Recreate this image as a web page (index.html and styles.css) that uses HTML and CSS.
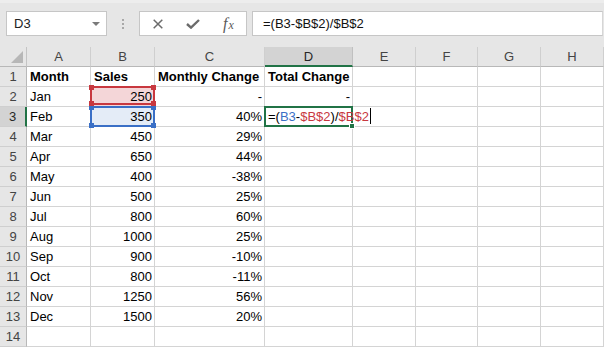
FILE: index.html
```html
<!DOCTYPE html>
<html>
<head>
<meta charset="utf-8">
<link rel="stylesheet" href="styles.css">
</head>
<body>
<div class="toolbar">
  <div class="namebox"><span class="nb-text">D3</span><span class="caret"></span></div>
  <div class="grip"><i></i><i></i><i></i></div>
  <div class="fbuttons">
    <span class="btn"><svg width="10" height="10" viewBox="0 0 10 10"><path d="M0.7 0.7 L9.3 9.3 M9.3 0.7 L0.7 9.3" stroke="#6b6b6b" stroke-width="1.5" fill="none"/></svg></span>
    <span class="btn"><svg width="14" height="10" viewBox="0 0 14 10"><path d="M1 5 L5 8.6 L13 1" stroke="#6b6b6b" stroke-width="2.4" fill="none"/></svg></span>
    <span class="btn fx"><span class="fx-f">f</span><span class="fx-x">x</span></span>
  </div>
  <div class="fbar">=(B3-$B$2)/$B$2</div>
</div>
<div class="sheet">
  <div class="corner"><svg width="12" height="12" viewBox="0 0 12 12"><path d="M12 0 L12 12 L0 12 Z" fill="#b7b7b7"/></svg></div>
  <div class="hd">A</div><div class="hd">B</div><div class="hd">C</div><div class="hd sel-col">D</div><div class="hd">E</div><div class="hd">F</div><div class="hd">G</div><div class="hd">H</div>

  <div class="rh">1</div><div class="c b">Month</div><div class="c b">Sales</div><div class="c b">Monthly Change</div><div class="c b">Total Change</div><div class="c"></div><div class="c"></div><div class="c"></div><div class="c"></div>

  <div class="rh">2</div><div class="c">Jan</div><div class="c n ref-red"><span class="rbox red"><i class="sq tl"></i><i class="sq tr"></i><i class="sq bl"></i><i class="sq br"></i></span>250</div><div class="c n">-</div><div class="c n">-</div><div class="c"></div><div class="c"></div><div class="c"></div><div class="c"></div>

  <div class="rh sel-row">3</div><div class="c">Feb</div><div class="c n ref-blue"><span class="rbox blue"><i class="sq tl"></i><i class="sq tr"></i><i class="sq bl"></i><i class="sq br"></i></span>350</div><div class="c n">40%</div><div class="c active"><span class="abox"><i class="handle"></i></span><span class="ftext">=(<span class="kb">B3</span>-<span class="kr">$B$2</span>)/<span class="kr">$B$2</span><span class="cursor"></span></span></div><div class="c"></div><div class="c"></div><div class="c"></div><div class="c"></div>

  <div class="rh">4</div><div class="c">Mar</div><div class="c n">450</div><div class="c n">29%</div><div class="c"></div><div class="c"></div><div class="c"></div><div class="c"></div><div class="c"></div>
  <div class="rh">5</div><div class="c">Apr</div><div class="c n">650</div><div class="c n">44%</div><div class="c"></div><div class="c"></div><div class="c"></div><div class="c"></div><div class="c"></div>
  <div class="rh">6</div><div class="c">May</div><div class="c n">400</div><div class="c n">-38%</div><div class="c"></div><div class="c"></div><div class="c"></div><div class="c"></div><div class="c"></div>
  <div class="rh">7</div><div class="c">Jun</div><div class="c n">500</div><div class="c n">25%</div><div class="c"></div><div class="c"></div><div class="c"></div><div class="c"></div><div class="c"></div>
  <div class="rh">8</div><div class="c">Jul</div><div class="c n">800</div><div class="c n">60%</div><div class="c"></div><div class="c"></div><div class="c"></div><div class="c"></div><div class="c"></div>
  <div class="rh">9</div><div class="c">Aug</div><div class="c n">1000</div><div class="c n">25%</div><div class="c"></div><div class="c"></div><div class="c"></div><div class="c"></div><div class="c"></div>
  <div class="rh">10</div><div class="c">Sep</div><div class="c n">900</div><div class="c n">-10%</div><div class="c"></div><div class="c"></div><div class="c"></div><div class="c"></div><div class="c"></div>
  <div class="rh">11</div><div class="c">Oct</div><div class="c n">800</div><div class="c n">-11%</div><div class="c"></div><div class="c"></div><div class="c"></div><div class="c"></div><div class="c"></div>
  <div class="rh">12</div><div class="c">Nov</div><div class="c n">1250</div><div class="c n">56%</div><div class="c"></div><div class="c"></div><div class="c"></div><div class="c"></div><div class="c"></div>
  <div class="rh">13</div><div class="c">Dec</div><div class="c n">1500</div><div class="c n">20%</div><div class="c"></div><div class="c"></div><div class="c"></div><div class="c"></div><div class="c"></div>
  <div class="rh">14</div><div class="c"></div><div class="c"></div><div class="c"></div><div class="c"></div><div class="c"></div><div class="c"></div><div class="c"></div><div class="c"></div>
</div>
</body>
</html>
```
FILE: styles.css
```css
* { box-sizing: border-box; }
html, body { margin: 0; padding: 0; }
body {
  width: 604px;
  height: 347px;
  overflow: hidden;
  background: #e6e6e6;
  font-family: "Liberation Sans", Arial, sans-serif;
  font-size: 13px;
  color: #000;
}
.toolbar {
  height: 47px;
  display: flex;
  align-items: flex-start;
  padding: 11px 1px 0 6px;
  background: #e6e6e6;
  border-top: 3px solid #ededed;
  padding-top: 8px;
}
.namebox {
  width: 101px;
  height: 25px;
  background: #fff;
  border: 1px solid #c6c6c6;
  display: flex;
  align-items: center;
  justify-content: space-between;
  padding: 0 6px 0 7px;
  color: #222;
}
.nb-text { font-size: 13px; }
.caret {
  width: 0; height: 0;
  border-left: 4px solid transparent;
  border-right: 4px solid transparent;
  border-top: 4px solid #7a7a7a;
}
.grip {
  width: 32px;
  height: 25px;
  display: flex;
  flex-direction: column;
  align-items: center;
  justify-content: center;
  gap: 2px;
}
.grip i {
  display: block;
  width: 2px;
  height: 2px;
  background: #a8a8a8;
}
.fbuttons {
  width: 108px;
  height: 25px;
  background: #fff;
  border: 1px solid #c6c6c6;
  display: flex;
}
.btn {
  width: 36px;
  display: flex;
  align-items: center;
  justify-content: center;
}
.fx {
  font-family: "Liberation Serif", "Times New Roman", serif;
  font-style: italic;
  color: #5a5a5a;
  align-items: baseline;
  padding-top: 3px;
}
.fx-f { font-size: 16px; }
.fx-x { font-size: 12px; margin-left: 1px; }
.fbar {
  flex: 1;
  margin-left: 5px;
  height: 25px;
  background: #fff;
  border: 1px solid #c6c6c6;
  border-right: 1px solid #d6d6d6;
  padding-left: 10px;
  line-height: 23px;
  font-size: 13px;
  color: #111;
}
.sheet {
  display: grid;
  grid-template-columns: 27px 64px 64px 110px 88px 63px 62px 63px 63px;
  grid-template-rows: repeat(15, 20px);
  background: #fff;
}
.corner {
  background: #e6e6e6;
  border-right: 1px solid #c4c4c4;
  border-bottom: 1px solid #b8b8b8;
  display: flex;
  align-items: flex-end;
  justify-content: flex-end;
  padding: 0 3px 3px 0;
}
.corner svg { display: block; }
.hd {
  background: #e6e6e6;
  border-right: 1px solid #cfcfcf;
  border-bottom: 1px solid #b8b8b8;
  text-align: center;
  line-height: 19px;
  color: #444;
}
.hd.sel-col {
  background: #d3d3d3;
  border-bottom: 2px solid #217346;
  border-right-color: #c0c0c0;
  color: #262626;
}
.rh {
  background: #e6e6e6;
  border-right: 1px solid #b8b8b8;
  border-bottom: 1px solid #cfcfcf;
  text-align: center;
  line-height: 19px;
  color: #444;
}
.rh.sel-row {
  background: #d3d3d3;
  border-right: 2px solid #217346;
  color: #262626;
}
.c {
  position: relative;
  border-right: 1px solid #d4d4d4;
  border-bottom: 1px solid #d4d4d4;
  padding: 0 3px;
  line-height: 19px;
  white-space: nowrap;
  overflow: visible;
}
.c.b { font-weight: bold; }
.c.n { text-align: right; padding-right: 2px; }
.ref-red { background: #f4d6d8; }
.ref-blue { background: #e4ecf7; }
.rbox {
  position: absolute;
  left: -1px;
  right: -1px;
  top: -1px;
  bottom: -1px;
  border: 2px solid;
  pointer-events: none;
}
.rbox.red { border-color: #c8383f; bottom: 1px; z-index: 3; }
.rbox.blue { border-color: #3a6fc6; z-index: 2; }
.sq {
  position: absolute;
  width: 5px;
  height: 5px;
}
.red .sq { background: #c8383f; }
.blue .sq { background: #3a6fc6; }
.sq.tl { left: -3px; top: -3px; }
.sq.tr { right: -3px; top: -3px; }
.sq.bl { left: -3px; bottom: -3px; }
.sq.br { right: -3px; bottom: -3px; }
.abox {
  position: absolute;
  left: -1px;
  right: -1px;
  top: -1px;
  bottom: -1px;
  border: 2px solid #217346;
  z-index: 2;
}
.handle {
  position: absolute;
  right: -4px;
  bottom: -4px;
  width: 6px;
  height: 6px;
  background: #217346;
  border: 1px solid #fff;
}
.ftext {
  position: relative;
  z-index: 4;
}
.kb { color: #3a6fc6; }
.kr { color: #c8383f; }
.cursor {
  display: inline-block;
  width: 1px;
  height: 16px;
  background: #000;
  margin-left: 1px;
  vertical-align: -3px;
}
```
